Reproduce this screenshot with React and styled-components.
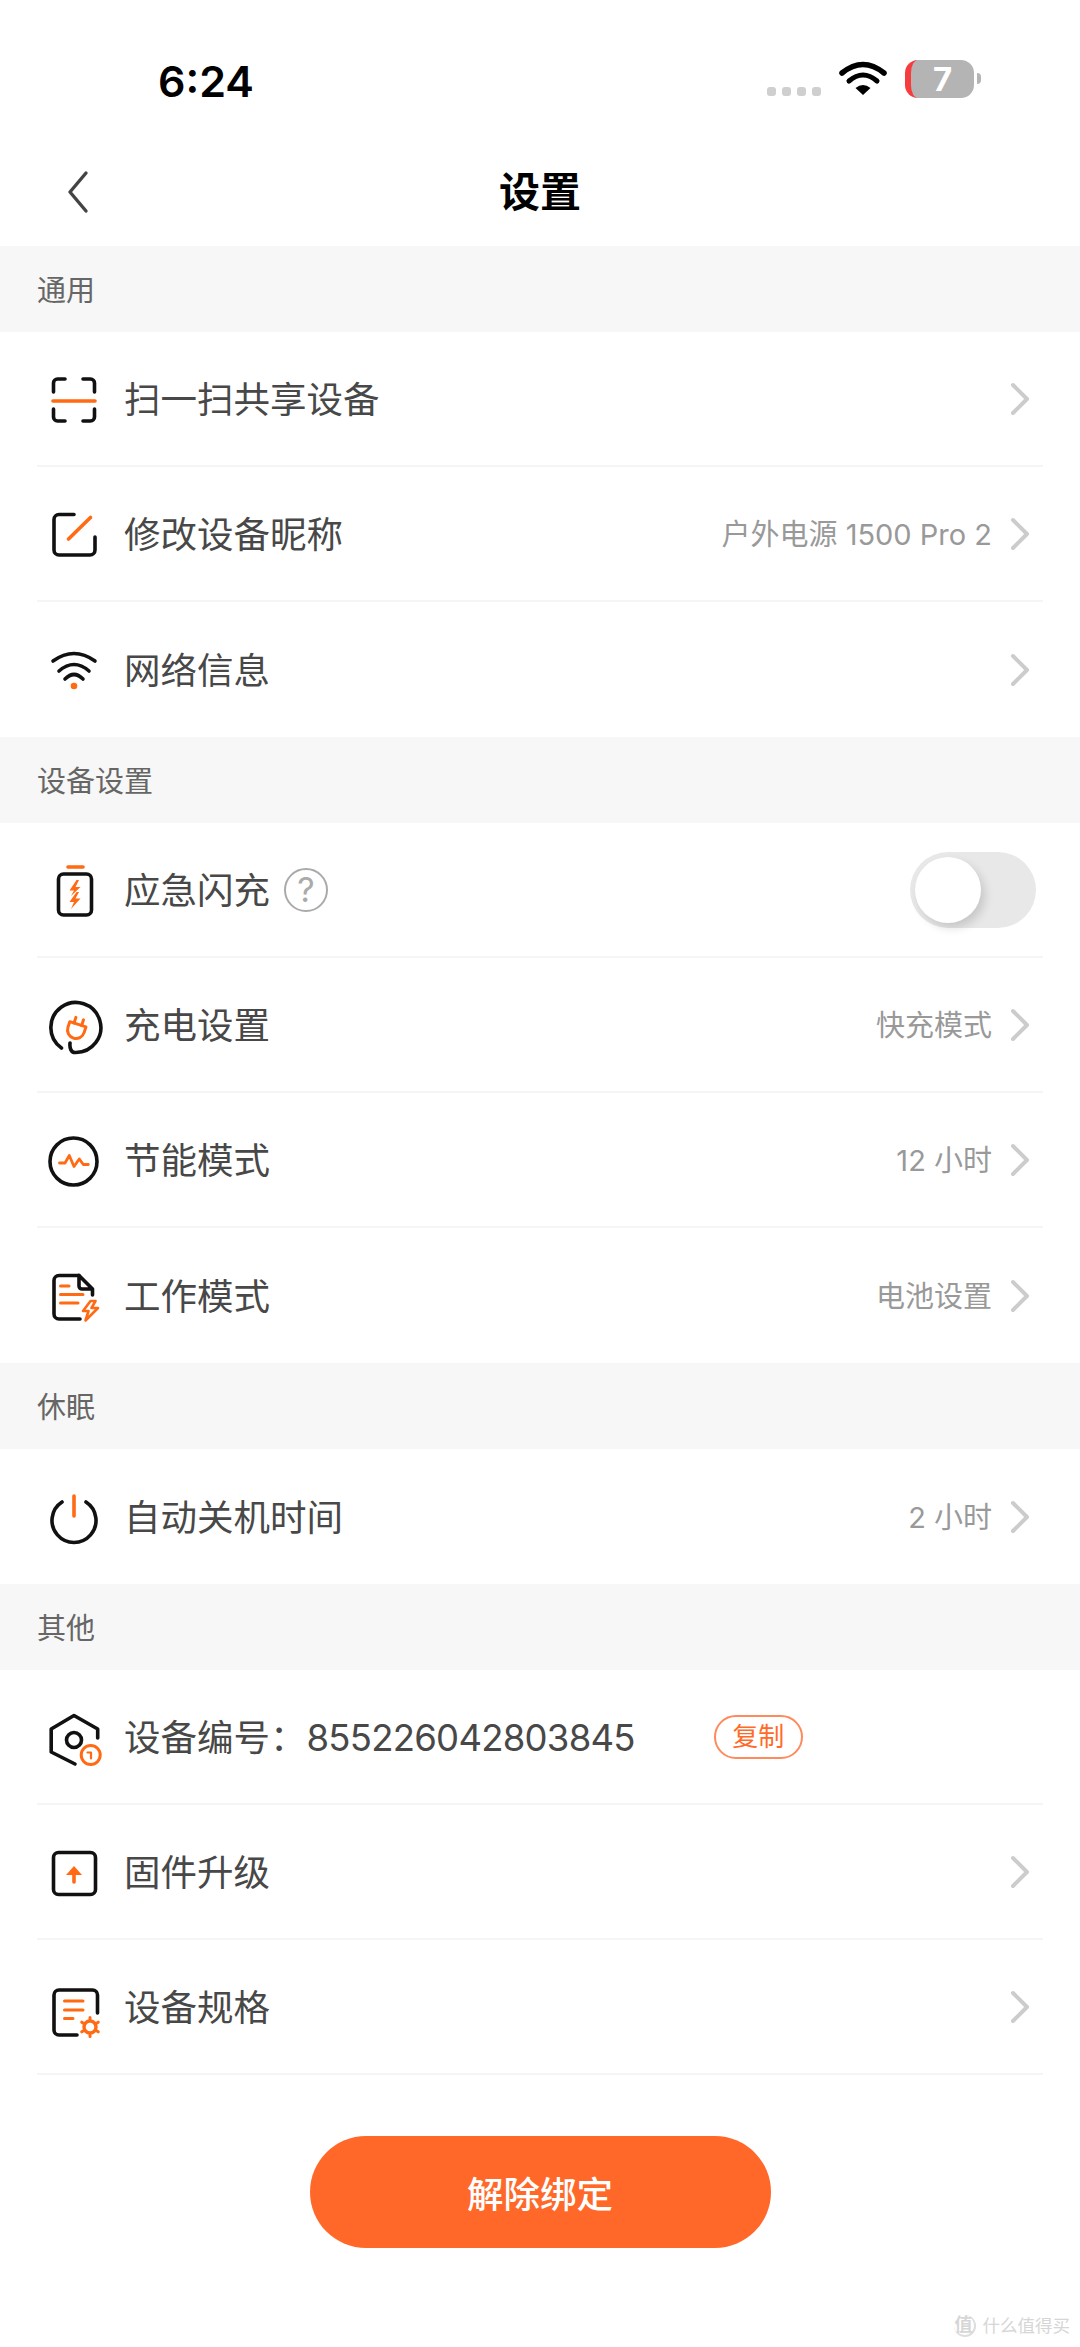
import styled, { createGlobalStyle } from "styled-components";

const GlobalStyle = createGlobalStyle`
  html, body {
    margin: 0;
    padding: 0;
    background: #ffffff;
  }
  * {
    box-sizing: border-box;
  }
`;

const Page = styled.div`
  position: relative;
  width: 1080px;
  height: 2347px;
  overflow: hidden;
  background: #ffffff;
  font-family: "Inter", "Noto Sans CJK SC", sans-serif;
  color: #484848;
`;

/* status bar */
const StatusBar = styled.div`
  height: 138px;
  padding: 59px 99px 0 158px;
  display: flex;
  align-items: flex-start;
  justify-content: space-between;
`;

const Time = styled.div`
  font-family: "Inter", sans-serif;
  font-size: 43px;
  font-weight: 600;
  line-height: 44px;
  color: #000000;
`;

const StatusRight = styled.div`
  display: flex;
  align-items: flex-start;
  padding-top: 2px;
`;

const Dots = styled.div`
  display: flex;
  gap: 6px;
  margin: 26px 18px 0 0;
`;

const Dot = styled.span`
  width: 9px;
  height: 9px;
  border-radius: 3px;
  background: #cfcfcf;
`;

const Battery = styled.div`
  width: 69px;
  height: 38px;
  margin: -1px 0 0 18px;
  border-radius: 13px;
  overflow: hidden;
  background: #b4b4b4;
  border-left: 6px solid #f63c3c;
  display: flex;
  align-items: center;
  justify-content: center;
  font-family: "Inter", sans-serif;
  font-size: 33px;
  font-weight: 700;
  color: #ffffff;
`;

const BatteryCap = styled.span`
  width: 4px;
  height: 11px;
  margin: 12px 0 0 3px;
  border-radius: 0 5px 5px 0;
  background: #b4b4b4;
`;

/* nav */
const Nav = styled.div`
  height: 108px;
  display: grid;
  grid-template-columns: 1fr auto 1fr;
  align-items: center;
`;

const BackIcon = styled.svg`
  width: 30px;
  height: 44px;
  margin-left: 65px;
  fill: none;
  stroke: #444444;
  stroke-width: 3.4;
  stroke-linecap: round;
  stroke-linejoin: round;
`;

const Title = styled.h1`
  margin: 0;
  font-size: 41px;
  line-height: 48px;
  font-weight: 700;
  color: #000000;
`;

/* list */
const SectionLabel = styled.div`
  height: 86px;
  padding: 0 0 3px 37px;
  display: flex;
  align-items: center;
  background: #f7f7f7;
  font-size: 29px;
  color: #666666;
`;

const Row = styled.div`
  height: 135px;
  margin: 0 37px;
  display: flex;
  align-items: center;
  border-bottom: ${(p) => (p.$noLine ? "none" : "2px solid #f5f5f5")};
`;

const RowIcon = styled.svg`
  flex: none;
  width: 70px;
  height: 70px;
  margin: 0 14px 0 3px;
  fill: none;
  stroke-width: 3.6;
  stroke-linecap: round;
  stroke-linejoin: round;

  .k {
    stroke: #111111;
  }
  .o {
    stroke: #ff6a13;
  }
  .of {
    fill: #ff6a13;
    stroke: none;
  }
`;

const RowLabel = styled.span`
  padding-top: 3px;
  font-size: 36.5px;
  line-height: 48px;
  color: #484848;
  white-space: nowrap;
`;

const SerialNumber = styled.span`
  letter-spacing: -0.75px;
`;

const RowValue = styled.span`
  margin-left: auto;
  padding-top: 2px;
  font-size: 29px;
  line-height: 40px;
  color: #999999;
  white-space: nowrap;
`;

const ChevronIcon = styled.svg`
  flex: none;
  width: 20px;
  height: 36px;
  margin: 0 13px 0 ${(p) => (p.$alone ? "auto" : "18px")};
  fill: none;
  stroke: #cccccc;
  stroke-width: 4;
  stroke-linecap: round;
  stroke-linejoin: round;
`;

const HelpBadge = styled.span`
  width: 44px;
  height: 44px;
  margin-left: 14px;
  border: 2.5px solid #aaaaaa;
  border-radius: 50%;
  display: flex;
  align-items: center;
  justify-content: center;
  font-size: 34px;
  line-height: 1;
  color: #aaaaaa;
`;

const Toggle = styled.div`
  width: 126px;
  height: 76px;
  margin: 0 7px 0 auto;
  padding: 5px;
  border-radius: 38px;
  background: #e8e8e8;
`;

const Knob = styled.div`
  width: 66px;
  height: 66px;
  border-radius: 50%;
  background: #ffffff;
  box-shadow: 4px 5px 10px rgba(0, 0, 0, 0.14);
`;

const CopyBadge = styled.span`
  width: 89px;
  height: 44px;
  margin-left: 79px;
  border: 2px solid #ff8a5c;
  border-radius: 22px;
  display: flex;
  align-items: center;
  justify-content: center;
  font-size: 26px;
  line-height: 1;
  color: #ff6a28;
`;

const Footer = styled.div`
  padding-top: 61px;
  display: flex;
  justify-content: center;
`;

const UnbindButton = styled.div`
  width: 461px;
  height: 112px;
  border-radius: 56px;
  background: #ff6829;
  display: flex;
  align-items: center;
  justify-content: center;
  font-size: 36.5px;
  font-weight: 500;
  color: #ffffff;
`;

const Watermark = styled.div`
  position: absolute;
  right: 10px;
  bottom: 10px;
  display: flex;
  align-items: center;
  gap: 7px;
  font-size: 17.5px;
  line-height: 22px;
  color: #d6d6d6;
`;

const WatermarkLogo = styled.span`
  width: 22px;
  height: 22px;
  border-right: 2px solid #dddddd;
  border-bottom: 2px solid #dddddd;
  border-radius: 50%;
  display: flex;
  align-items: center;
  justify-content: center;
  font-size: 18px;
  font-weight: 700;
`;

const Chevron = ({ alone }) => (
  <ChevronIcon viewBox="0 0 20 36" $alone={alone}>
    <path d="M3 4 L17 18 L3 32" />
  </ChevronIcon>
);

const Scan = () => (
  <RowIcon viewBox="0 0 70 70">
    <path className="k" d="M13.5 28 V19 a4 4 0 0 1 4 -4 H25" />
    <path className="k" d="M43 15 H50.5 a4 4 0 0 1 4 4 V28" />
    <path className="k" d="M13.5 45 V53 a4 4 0 0 0 4 4 H25" />
    <path className="k" d="M43 57 H50.5 a4 4 0 0 0 4 -4 V45" />
    <path className="o" d="M13 37 H55" />
  </RowIcon>
);

const Edit = () => (
  <RowIcon viewBox="0 0 70 70">
    <path className="k" d="M34 15.5 H19 a5 5 0 0 0 -5 5 V51 a5 5 0 0 0 5 5 H50 a5 5 0 0 0 5 -5 V38" />
    <path className="o" d="M28.5 40 L50.5 18.5" />
  </RowIcon>
);

const Wifi = () => (
  <RowIcon viewBox="0 0 70 70">
    <path className="k" d="M13 26 Q34 11 55 26" />
    <path className="k" d="M19 36 Q34 23 49 36" />
    <path className="k" d="M25 44 Q34 35 43 44" />
    <circle className="of" cx="34" cy="51" r="3.3" />
  </RowIcon>
);

const BatteryFlash = () => (
  <RowIcon viewBox="0 0 70 70">
    <rect className="k" x="18.5" y="19" width="33" height="41" rx="5" />
    <path className="o" d="M28 12 H43" />
    <polygon className="of" points="36.5,25 29.5,35.5 34,35.5 31,41 40.5,32 35.5,32 39,25" />
    <polygon className="of" points="36.5,37 29.5,47 34,47 31,54 40.5,43.5 35.5,43.5 39,37" />
  </RowIcon>
);

const Plug = () => (
  <RowIcon viewBox="0 0 70 70">
    <path className="k" d="M21.5 58 A25 25 0 1 1 35 62.5 C31 62.5 29.5 58 30 53" />
    <g transform="rotate(18 36 40)">
      <path className="o" d="M27.5 34 H44.5 V40 a8.5 8.5 0 0 1 -17 0 Z" strokeWidth="3" />
      <path className="o" d="M32 34 V28 M40 34 V28" strokeWidth="3" />
    </g>
  </RowIcon>
);

const Pulse = () => (
  <RowIcon viewBox="0 0 70 70">
    <circle className="k" cx="33.5" cy="36.5" r="23.5" />
    <path className="o" d="M19.5 38 H25 L29.3 30.5 L34 41.5 L39.3 34 L43.3 39.5 H48.3" strokeWidth="2.8" />
  </RowIcon>
);

const FileFlash = () => (
  <RowIcon viewBox="0 0 70 70">
    <path className="k" d="M39 14.5 H19 a5 5 0 0 0 -5 5 V53 a5 5 0 0 0 5 5 H40" />
    <path className="k" d="M39 14.5 L52.5 28 V34 M39 14.5 V25 a3 3 0 0 0 3 3 H52.5" />
    <path className="o" d="M20.5 25 H29 M20.5 33.5 H43 M20.5 42 H38" strokeWidth="3" />
    <path className="o" d="M50.5 40 L43 50 H48.5 L45.5 59.5 L58 47 H51.5 L55.5 40 Z" strokeWidth="2.6" />
  </RowIcon>
);

const Power = () => (
  <RowIcon viewBox="0 0 70 70">
    <path className="k" d="M22 20 A22 22 0 1 0 46 20" />
    <path className="o" d="M34 14 V34" />
  </RowIcon>
);

const HexSerial = () => (
  <RowIcon viewBox="0 0 70 70">
    <path className="k" d="M57.7 36 V27 L34 13.5 L11.2 27 V50 L35 62" />
    <circle className="k" cx="34" cy="38" r="7.5" />
    <circle className="o" cx="50.7" cy="53" r="9.5" strokeWidth="3" />
    <path className="o" d="M47.5 50.5 H51 V56.5" strokeWidth="2.2" />
  </RowIcon>
);

const Upgrade = () => (
  <RowIcon viewBox="0 0 70 70">
    <rect className="k" x="13.5" y="15.5" width="42" height="42" rx="5" />
    <polygon className="of" points="34,29 42,38 26,38" />
    <path className="o" d="M34 37 V45" />
  </RowIcon>
);

const FileGear = () => (
  <RowIcon viewBox="0 0 70 70">
    <path className="k" d="M57.5 41 V23 a5 5 0 0 0 -5 -5 H19 a5 5 0 0 0 -5 5 V58 a5 5 0 0 0 5 5 H37" />
    <path className="o" d="M24.5 29 H43 M24.5 38 H43 M24.5 46.5 H33" strokeWidth="3" />
    <circle className="o" cx="50" cy="55" r="6" strokeWidth="3.4" />
    <path className="o" d="M50 45.5 V47 M50 63 V64.5 M41.8 50.2 L43 51 M57 59 L58.2 59.8 M41.8 59.8 L43 59 M57 51 L58.2 50.2" strokeWidth="3" />
  </RowIcon>
);

export default function App() {
  return (
    <Page>
      <GlobalStyle />

      <StatusBar>
        <Time>6:24</Time>
        <StatusRight>
          <Dots>
            <Dot />
            <Dot />
            <Dot />
            <Dot />
          </Dots>
          <svg width="48" height="34" viewBox="0 0 48 34">
            <path d="M3 12 Q24 -5 45 12" fill="none" stroke="#000" strokeWidth="5.5" strokeLinecap="round" />
            <path d="M10 20 Q24 8 38 20" fill="none" stroke="#000" strokeWidth="5" strokeLinecap="round" />
            <path d="M24 34 L16.5 27 Q24 21 31.5 27 Z" fill="#000" />
          </svg>
          <Battery>7</Battery>
          <BatteryCap />
        </StatusRight>
      </StatusBar>

      <Nav>
        <BackIcon viewBox="0 0 30 44">
          <path d="M21 3 L5 22 L21 41" />
        </BackIcon>
        <Title>设置</Title>
      </Nav>

      <SectionLabel>通用</SectionLabel>
      <Row>
        <Scan />
        <RowLabel>扫一扫共享设备</RowLabel>
        <Chevron alone />
      </Row>
      <Row>
        <Edit />
        <RowLabel>修改设备昵称</RowLabel>
        <RowValue>户外电源 1500 Pro 2</RowValue>
        <Chevron />
      </Row>
      <Row $noLine>
        <Wifi />
        <RowLabel>网络信息</RowLabel>
        <Chevron alone />
      </Row>

      <SectionLabel>设备设置</SectionLabel>
      <Row>
        <BatteryFlash />
        <RowLabel>应急闪充</RowLabel>
        <HelpBadge>?</HelpBadge>
        <Toggle>
          <Knob />
        </Toggle>
      </Row>
      <Row>
        <Plug />
        <RowLabel>充电设置</RowLabel>
        <RowValue>快充模式</RowValue>
        <Chevron />
      </Row>
      <Row>
        <Pulse />
        <RowLabel>节能模式</RowLabel>
        <RowValue>12 小时</RowValue>
        <Chevron />
      </Row>
      <Row $noLine>
        <FileFlash />
        <RowLabel>工作模式</RowLabel>
        <RowValue>电池设置</RowValue>
        <Chevron />
      </Row>

      <SectionLabel>休眠</SectionLabel>
      <Row $noLine>
        <Power />
        <RowLabel>自动关机时间</RowLabel>
        <RowValue>2 小时</RowValue>
        <Chevron />
      </Row>

      <SectionLabel>其他</SectionLabel>
      <Row>
        <HexSerial />
        <RowLabel>
          设备编号：<SerialNumber>855226042803845</SerialNumber>
        </RowLabel>
        <CopyBadge>复制</CopyBadge>
      </Row>
      <Row>
        <Upgrade />
        <RowLabel>固件升级</RowLabel>
        <Chevron alone />
      </Row>
      <Row>
        <FileGear />
        <RowLabel>设备规格</RowLabel>
        <Chevron alone />
      </Row>

      <Footer>
        <UnbindButton>解除绑定</UnbindButton>
      </Footer>

      <Watermark>
        <WatermarkLogo>值</WatermarkLogo>
        什么值得买
      </Watermark>
    </Page>
  );
}
